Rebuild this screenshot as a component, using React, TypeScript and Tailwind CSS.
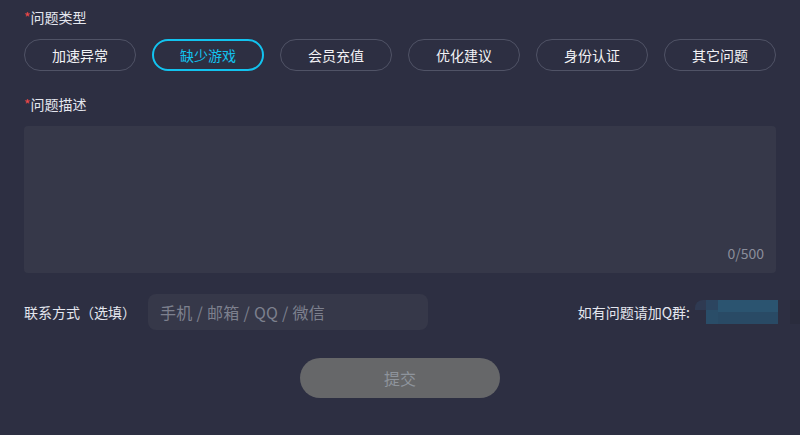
import { useState } from 'react'

const types = ['加速异常', '缺少游戏', '会员充值', '优化建议', '身份认证', '其它问题']

export default function App() {
    const [active, setActive] = useState(1)
    const [text, setText] = useState('')

    return (
        <div
            className="w-[800px] h-[435px] bg-[#2d2f42] px-6 pt-[7px] text-[#e4e6ee] overflow-hidden"
            style={{ fontFamily: '"Noto Sans CJK SC", "Noto Sans", sans-serif' }}
        >
            {/* Type */}
            <div className="text-sm leading-5">
                <span className="text-[#f04848]">*</span>问题类型
            </div>
            <div className="mt-3 flex gap-4">
                {types.map((t, i) => (
                    <button
                        key={t}
                        onClick={() => setActive(i)}
                        className={
                            i === active
                                ? 'w-28 h-8 rounded-full border-2 border-[#12c3ef] text-[#12c3ef] text-sm'
                                : 'w-28 h-8 rounded-full border border-[#505366] text-[#f2f2f5] text-sm'
                        }
                    >
                        {t}
                    </button>
                ))}
            </div>

            {/* Description */}
            <div className="mt-[23px] text-sm leading-5">
                <span className="text-[#f04848]">*</span>问题描述
            </div>
            <div className="relative mt-3 h-[147px] rounded bg-[#363849]">
                <textarea
                    value={text}
                    onChange={e => setText(e.target.value.slice(0, 500))}
                    className="w-full h-full bg-transparent resize-none outline-none p-3 text-sm"
                />
                <span className="absolute right-3 bottom-[10px] text-sm text-[#8b8e9b]">{text.length}/500</span>
            </div>

            {/* Contact */}
            <div className="mt-[21px] flex items-center">
                <span className="text-sm w-[124px] whitespace-nowrap">联系方式（选填）</span>
                <input
                    placeholder="手机 / 邮箱 / QQ / 微信"
                    className="w-[280px] h-9 rounded-lg bg-[#363849] px-3 text-base tracking-[0.3px] outline-none placeholder:text-[#7d808e]"
                />
                <span className="ml-auto text-sm mr-[5px]">如有问题请加Q群:</span>
                <div className="flex items-center -mr-6">
                    <div className="w-[83px] h-6 flex">
                        <div className="w-[11px] h-full flex flex-col">
                            <div className="h-[10px] bg-[#2f3a52] rounded-tl-lg" />
                            <div className="flex-1" />
                        </div>
                        <div className="w-[12px] h-full flex flex-col">
                            <div className="h-[10px] bg-[#2c4560]" />
                            <div className="flex-1 bg-[#2a4d68]" />
                        </div>
                        <div className="flex-1 h-full flex flex-col">
                            <div className="h-[12px] bg-[#2b5470]" />
                            <div className="flex-1 bg-[#294a65]" />
                        </div>
                    </div>
                    <div className="w-[12px]" />
                    <div className="w-[10px] h-6 bg-[#2a2c3d]" />
                </div>
            </div>

            {/* Submit */}
            <div className="mt-7 flex justify-center">
                <button className="w-[200px] h-10 rounded-full bg-[#666769] text-base text-[#8e949c]">提交</button>
            </div>
        </div>
    )
}
